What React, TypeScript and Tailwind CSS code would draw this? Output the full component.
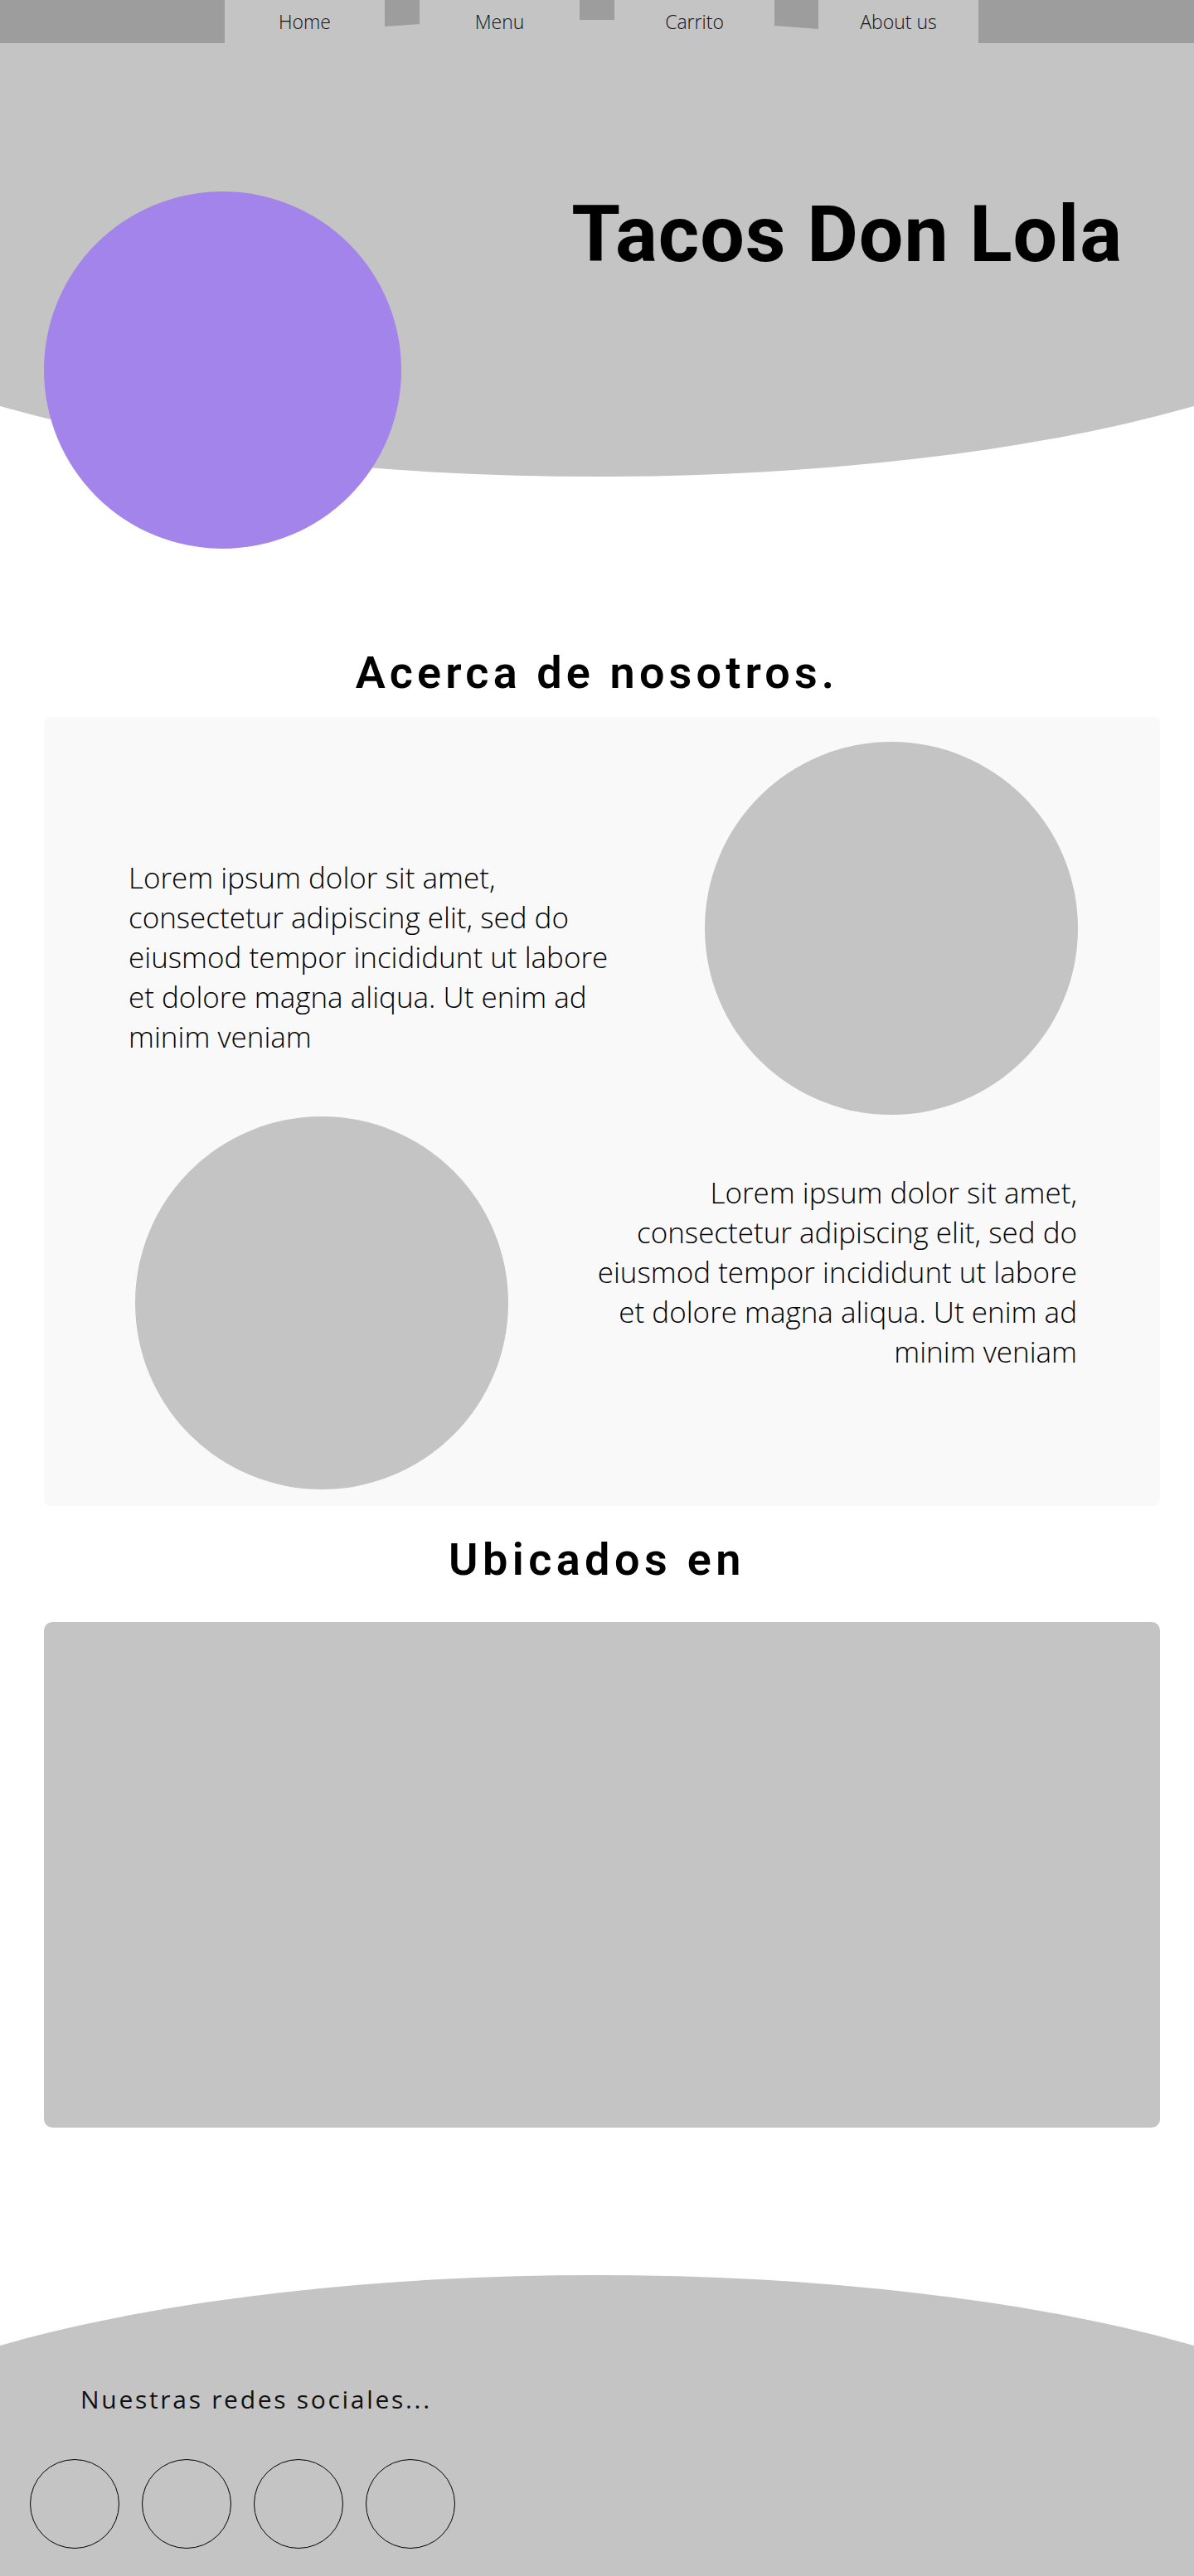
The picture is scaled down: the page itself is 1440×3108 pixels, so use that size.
const navItems = [
  { label: "Home", sep: "h-[32px] w-[42px] [clip-path:polygon(0_0,100%_0,100%_29px,0_100%)]" },
  { label: "Menu", sep: "h-[24px] w-[42px]" },
  { label: "Carrito", sep: "h-[35px] w-[53px] [clip-path:polygon(0_0,100%_0,100%_100%,0_31px)]" },
  { label: "About us", sep: null },
]

const lorem = [
  "Lorem ipsum dolor sit amet,",
  "consectetur adipiscing elit, sed do",
  "eiusmod tempor incididunt ut labore",
  "et dolore magna aliqua. Ut enim ad",
  "minim veniam",
]

function Lorem({ align }: { align: "left" | "right" }) {
  return (
    <p
      className={
        "text-[35px] font-light leading-[48px] whitespace-nowrap " +
        (align === "right" ? "text-right" : "text-left")
      }
    >
      {lorem.map((line, i) => (
        <span key={i} className="block">
          {line}
        </span>
      ))}
    </p>
  )
}

export default function App() {
  return (
    <div className="w-[1440px] overflow-hidden bg-white font-['Open_Sans',sans-serif] text-black">
      {/* hero */}
      <header className="relative isolate h-[575px]">
        <div className="absolute inset-0 -z-10 overflow-hidden">
          <div className="ml-[-280px] h-full w-[2000px] rounded-b-[1000px_278px] bg-[#c4c4c4]" />
        </div>

        <nav className="flex h-[52px] items-start">
          <div className="h-[52px] w-[271px] bg-[#9d9d9d]" />
          {navItems.map((item) => (
            <div key={item.label} className="flex items-start">
              <a className="flex h-[52px] w-[193px] items-center justify-center text-[23px] font-light text-[#111]">
                {item.label}
              </a>
              {item.sep ? <div className={item.sep + " bg-[#9d9d9d]"} /> : null}
            </div>
          ))}
          <div className="h-[52px] flex-1 bg-[#9d9d9d]" />
        </nav>

        <div className="flex items-start justify-between pl-[53px] pr-[86px] pt-[179px]">
          <div className="h-[431px] w-[431px] shrink-0 rounded-full bg-[#a384ea]" />
          <h1 className="mt-[4px] font-['Roboto',sans-serif] text-[95px] font-bold leading-none tracking-[0.01em]">
            Tacos Don Lola
          </h1>
        </div>
      </header>

      {/* about */}
      <section>
        <h2 className="mt-[210px] text-center font-['Roboto',sans-serif] text-[54px] font-semibold leading-none tracking-[0.095em]">
          Acerca de nosotros.
        </h2>
        <div className="ml-[53px] mt-[26px] flex h-[952px] w-[1346px] flex-col rounded-[8px] bg-[#f9f9f9] pt-[30px]">
          <div className="flex items-start justify-between pl-[102px] pr-[99px]">
            <div className="pt-[140px]">
              <Lorem align="left" />
            </div>
            <div className="h-[450px] w-[450px] rounded-full bg-[#c4c4c4]" />
          </div>
          <div className="flex items-start justify-between pl-[110px] pr-[100px] pt-[2px]">
            <div className="h-[450px] w-[450px] rounded-full bg-[#c4c4c4]" />
            <div className="pt-[68px]">
              <Lorem align="right" />
            </div>
          </div>
        </div>
      </section>

      {/* location */}
      <section>
        <h2 className="mt-[38px] text-center font-['Roboto',sans-serif] text-[54px] font-semibold leading-none tracking-[0.1em]">
          Ubicados en
        </h2>
        <div className="ml-[53px] mt-[48px] h-[610px] w-[1346px] rounded-[10px] bg-[#c4c4c4]" />
      </section>

      {/* footer */}
      <footer className="relative isolate mt-[178px] h-[363px]">
        <div className="absolute inset-0 -z-10 overflow-hidden">
          <div className="ml-[-280px] h-full w-[2000px] rounded-t-[1000px_278px] bg-[#c4c4c4]" />
        </div>
        <p className="pl-[97px] pt-[135px] text-[30px] leading-none tracking-[0.09em] text-[#111]">
          Nuestras redes sociales...
        </p>
        <div className="mt-[57px] flex gap-[27px] pl-[36px]">
          {[0, 1, 2, 3].map((i) => (
            <a key={i} className="h-[108px] w-[108px] rounded-full border border-black" />
          ))}
        </div>
      </footer>
    </div>
  )
}
